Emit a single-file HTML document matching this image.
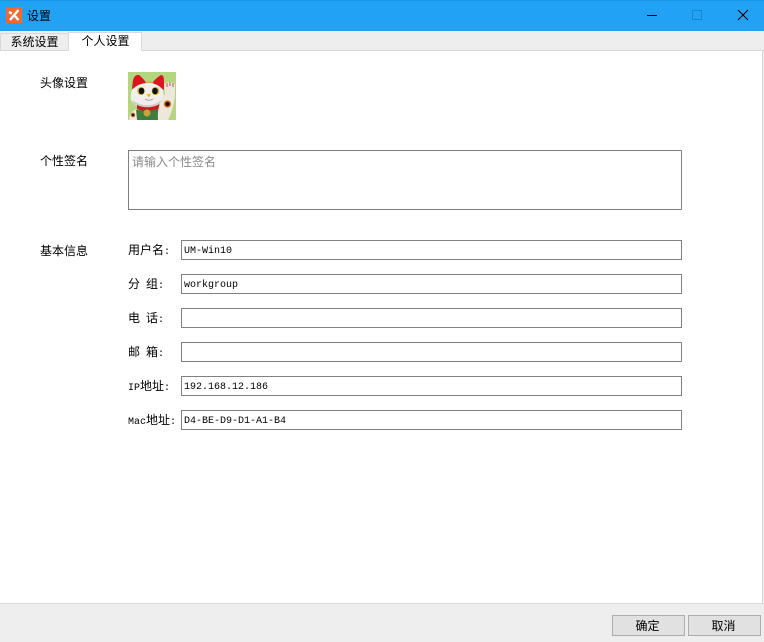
<!DOCTYPE html>
<html><head><meta charset="utf-8">
<style>
*{box-sizing:border-box;margin:0;padding:0}
html,body{width:764px;height:642px;overflow:hidden;background:#fff}
body{position:relative;font:12px/16px "WenQuanYi Zen Hei","Noto Sans CJK SC",sans-serif;color:#000}
.a{position:absolute;white-space:nowrap}
.inp{position:absolute;left:181px;width:501px;height:20px;border:1px solid #808080;background:#fff;padding-left:2px;font:10px/22px "Liberation Mono",monospace;white-space:nowrap}
.l{position:absolute;left:128px;white-space:nowrap;line-height:16px}
.m{font:10px "Liberation Mono",monospace}
.s{display:inline-block;width:6px}
.btn{position:absolute;top:615px;width:73px;height:21px;background:#e1e1e1;border:1px solid #adadad;text-align:center;line-height:20px;padding-right:2px}
</style></head><body>
<div class="a" style="left:0;top:0;width:764px;height:31px;background:#22a2f5;border-top:1px solid #1a93e8"></div>
<svg class="a" style="left:6px;top:7px" width="16" height="16" viewBox="0 0 16 16"><rect width="16" height="16" fill="#f4682c"/><path d="M3 5l3 1.500M12.500 3L4 13M8.500 8.500l4 4.500" stroke="#fff" stroke-width="2.400" fill="none"/></svg>
<div class="a" style="left:27px;top:8px">设置</div>
<svg class="a" style="left:640px;top:5px" width="120" height="20" viewBox="0 0 120 20"><path d="M7 10.500H17" stroke="#000" stroke-width="1"/><rect x="52.500" y="5.500" width="9" height="9" fill="none" stroke="#1a84cc"/><path d="M98 5L108 15M108 5L98 15" stroke="#000" stroke-width="1.100"/></svg>

<div class="a" style="left:0;top:31px;width:764px;height:20px;background:#eee"></div>
<div class="a" style="left:0;top:50px;width:764px;height:1px;background:#d9d9d9"></div>
<div class="a" style="left:0;top:33px;width:69px;height:18px;background:#eee;border:1px solid #d9d9d9;text-align:center;line-height:16px">系统设置</div>
<div class="a" style="left:68px;top:32px;width:74px;height:19px;background:#fff;border:1px solid #d9d9d9;border-bottom:0;text-align:center;line-height:16px;padding-left:1px">个人设置</div>
<div class="a" style="left:762px;top:51px;width:1px;height:552px;background:#d9d9d9"></div>
<div class="a" style="left:763px;top:51px;width:1px;height:552px;background:#eee"></div>

<div class="a" style="left:40px;top:75px">头像设置</div>
<svg class="a" style="left:128px;top:72px" width="48" height="48" viewBox="0 0 48 48">
<rect width="48" height="48" fill="#b3d67f"/>
<path d="M4 17L5 8Q7 2 11 3Q15 6 19 12Z" fill="#dc1420"/>
<path d="M24 11Q28 6 33 3Q36 3 36 9L36 18Z" fill="#dc1420"/>
<path d="M17 10Q21 8 26 11L22 14Z" fill="#d9a648"/>
<path d="M4 18Q10 11 20 11Q30 11 35 18Q37 25 33 31Q26 36 15 36Q6 35 3 28Q2 22 4 18Z" fill="#f1efeb"/>
<path d="M4 28Q12 34 22 33Q30 32 34 27L32 33Q24 37 14 37Q7 36 4 28Z" fill="#cfcdc8"/>
<ellipse cx="13" cy="19" rx="3.800" ry="4" fill="#d6b32a"/><ellipse cx="13.500" cy="19" rx="2.800" ry="3.300" fill="#111"/>
<ellipse cx="27.500" cy="19" rx="3.800" ry="4" fill="#d6b32a"/><ellipse cx="27" cy="19" rx="2.800" ry="3.300" fill="#111"/>
<path d="M18.500 22h4.500l-2.200 3.500z" fill="#f0b020"/>
<path d="M17 27q4 2.500 8 0" fill="none" stroke="#999" stroke-width=".8"/>
<path d="M8 38L5 48H35L33 36Z" fill="#3f7d3e"/>
<path d="M9 33Q20 38 32 32L32 36Q20 41 9 37Z" fill="#c4201f"/>
<circle cx="19" cy="41" r="3.500" fill="#caa23c"/>
<path d="M8 37Q2 40 1 48H9Z" fill="#efe9e0"/><circle cx="5" cy="43" r="2.200" fill="#b8501e"/><circle cx="5" cy="43" r="1.100" fill="#201510"/>
<path d="M36 12Q42 8 47 12L47 24L46 30Q44 40 40 48H30Q29 38 33 28L37 22Z" fill="#eee7dc"/>
<path d="M39 11v4M42 10v4M45 11v4" stroke="#c4524a" stroke-width="1"/>
<circle cx="39.500" cy="32" r="3.800" fill="#dd7a22"/><circle cx="39.500" cy="32" r="2.300" fill="#1c1410"/>
</svg>

<div class="a" style="left:40px;top:153px">个性签名</div>
<div class="a" style="left:128px;top:150px;width:554px;height:60px;border:1px solid #808080;padding:3px 0 0 3px;color:#8a8a8a">请输入个性签名</div>

<div class="a" style="left:40px;top:243px">基本信息</div>

<div class="l" style="top:242px">用户名<span class="m">:</span></div>
<div class="inp" style="top:240px">UM-Win10</div>
<div class="l" style="top:276px">分<span class="s"></span>组<span class="m">:</span></div>
<div class="inp" style="top:274px">workgroup</div>
<div class="l" style="top:310px">电<span class="s"></span>话<span class="m">:</span></div>
<div class="inp" style="top:308px"></div>
<div class="l" style="top:344px">邮<span class="s"></span>箱<span class="m">:</span></div>
<div class="inp" style="top:342px"></div>
<div class="l" style="top:378px"><span class="m">IP</span>地址<span class="m">:</span></div>
<div class="inp" style="top:376px">192.168.12.186</div>
<div class="l" style="top:412px"><span class="m">Mac</span>地址<span class="m">:</span></div>
<div class="inp" style="top:410px">D4-BE-D9-D1-A1-B4</div>

<div class="a" style="left:0;top:603px;width:764px;height:39px;background:#eee;border-top:1px solid #d9d9d9"></div>
<div class="btn" style="left:612px">确定</div>
<div class="btn" style="left:688px">取消</div>
</body></html>
